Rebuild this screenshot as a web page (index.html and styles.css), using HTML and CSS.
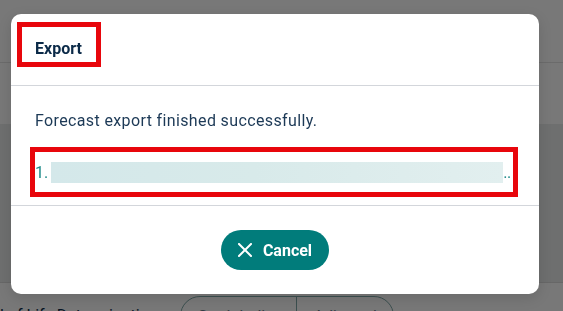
FILE: index.html
```html
<!DOCTYPE html>
<html lang="en">
<head>
<meta charset="utf-8">
<title>Export</title>
<link rel="stylesheet" href="styles.css">
</head>
<body>
<div class="page">
  <header class="topbar"></header>
  <section class="band"></section>
  <section class="card"></section>
  <div class="row">
    <span class="row-label">l of Life Determination</span>
    <div class="segmented">
      <span class="seg">Straight line</span>
      <span class="seg">Adjusted</span>
    </div>
  </div>
</div>
<div class="overlay"></div>
<div class="dialog" role="dialog">
  <div class="dialog-header">
    <h2 class="dialog-title">Export</h2>
  </div>
  <div class="dialog-body">
    <p class="message">Forecast export finished successfully.</p>
    <div class="file-item">
      <span class="file-num">1.</span>
      <span class="file-link"></span>
      <span class="file-more">..</span>
    </div>
  </div>
  <div class="dialog-footer">
    <button class="btn-cancel" type="button">
      <svg class="btn-icon" width="14" height="14" viewBox="0 0 14 14" aria-hidden="true"><path d="M1 1L13 13M13 1L1 13" stroke="#fff" stroke-width="2" stroke-linecap="square" fill="none"/></svg>
      <span>Cancel</span>
    </button>
  </div>
</div>
</body>
</html>
```
FILE: styles.css
```css
html, body {
  margin: 0;
  padding: 0;
  height: 100%;
  overflow: hidden;
}
body {
  font-family: Roboto, "Liberation Sans", sans-serif;
  background: #ffffff;
}
.page {
  display: flex;
  flex-direction: column;
}
.topbar {
  height: 62px;
  border-bottom: 1px solid #e4e4e4;
  background: #fff;
}
.band {
  height: 61px;
  background: #fff;
}
.card {
  height: 158px;
  background: #e9ebeb;
  border-bottom: 1px solid #dcdcdc;
}
.row {
  display: flex;
  align-items: flex-start;
  gap: 28px;
  padding-top: 13px;
}
.row-label {
  font-size: 16px;
  line-height: 40px;
  color: #0e2d4c;
  width: 152px;
  white-space: nowrap;
}
.segmented {
  display: flex;
  height: 40px;
  border: 1px solid #7fa8a8;
  border-radius: 20px;
  overflow: hidden;
}
.seg {
  font-size: 16px;
  line-height: 40px;
  color: #6a7d8e;
  padding: 0 13px 0 17px;
  white-space: nowrap;
}
.seg + .seg {
  border-left: 1px solid #7fa8a8;
  padding: 0 16px 0 17px;
}
.overlay {
  position: fixed;
  inset: 0;
  background: rgba(0, 0, 0, 0.53);
}
.dialog {
  position: absolute;
  left: 11px;
  top: 14px;
  width: 528px;
  background: #fff;
  border-radius: 10px;
  box-shadow: 0 4px 14px rgba(0, 0, 0, 0.12);
}
.dialog-header {
  padding: 13px 11px 23px;
  border-bottom: 1px solid #d3d6db;
}
.dialog-title {
  display: inline-block;
  margin: 0;
  padding: 10px 14px 1px 13px;
  font-size: 16px;
  line-height: 24px;
  font-weight: 700;
  color: #0b2a48;
  outline: 5px solid #e8060c;
}
.dialog-body {
  padding: 23px 26px 13px 24px;
  border-bottom: 1px solid #d3d6db;
}
.message {
  margin: 0;
  font-size: 16px;
  line-height: 24px;
  letter-spacing: 0.37px;
  color: #1c3956;
}
.file-item {
  margin-top: 19px;
  height: 40px;
  display: flex;
  align-items: center;
  outline: 5px solid #e8060c;
  font-size: 16px;
  color: #1f8b8a;
}
.file-num {
  margin-left: 0;
}
.file-link {
  margin-left: 3px;
  width: 452px;
  height: 21px;
  background: linear-gradient(90deg, #d4e8ea 0%, #d8eaea 45%, #e2efef 100%);
}
.file-more {
  margin-left: 0;
  letter-spacing: -0.5px;
}
.dialog-footer {
  display: flex;
  justify-content: center;
  padding: 24px 0;
}
.btn-cancel {
  display: flex;
  align-items: center;
  gap: 11px;
  height: 40px;
  padding: 0 17px;
  border: none;
  border-radius: 20px;
  background: #017c7b;
  color: #fff;
  font-family: Roboto, "Liberation Sans", sans-serif;
  font-size: 16px;
  font-weight: 700;
}
.btn-icon {
  display: block;
}
```
